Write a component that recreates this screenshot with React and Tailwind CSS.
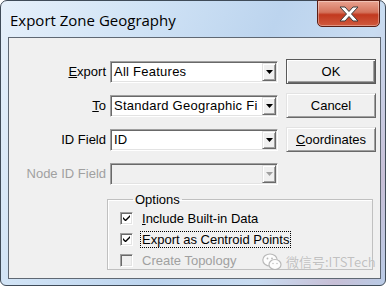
import React from 'react';

const font = { fontFamily: '"Liberation Sans", Arial, sans-serif' };

function Arrow({ disabled }) {
  return (
    <svg width="7" height="4" viewBox="0 0 7 4">
      <path d="M0 0h7L3.5 4z" fill={disabled ? '#a0a0a0' : '#000'} />
    </svg>
  );
}

function Combo({ value, disabled }) {
  return (
    <div
      className={`w-[168px] h-[22px] flex border border-t-[#a0a0a0] border-l-[#a0a0a0] border-b-white border-r-white shadow-[inset_1px_1px_0_#696969,inset_-1px_-1px_0_#e3e3e3] p-[1px] ${
        disabled ? 'bg-[#f0f0f0]' : 'bg-white'
      }`}
    >
      <div className="flex-1 mr-[5px] overflow-hidden whitespace-nowrap pl-[2px] text-[13px] leading-[18px] tracking-[0.25px] text-black">
        {value}
      </div>
      <div className="w-[14px] h-[18px] bg-[#f0f0f0] flex items-center justify-center border border-t-[#e3e3e3] border-l-[#e3e3e3] border-b-[#696969] border-r-[#696969] shadow-[inset_1px_1px_0_#fff,inset_-1px_-1px_0_#a0a0a0]">
        <Arrow disabled={disabled} />
      </div>
    </div>
  );
}

function Button({ children, isDefault }) {
  return (
    <div
      className={`w-[90px] h-[25px] flex items-center justify-center text-[13px] text-black bg-[#f0f0f0] ${
        isDefault
          ? 'border border-[#5a5a5a] shadow-[inset_1px_1px_0_#fff,inset_-1px_-1px_0_#696969,inset_-2px_-2px_0_#a0a0a0]'
          : 'border border-t-[#e3e3e3] border-l-[#e3e3e3] border-b-[#696969] border-r-[#696969] shadow-[inset_1px_1px_0_#fff,inset_-1px_-1px_0_#a0a0a0]'
      }`}
    >
      {children}
    </div>
  );
}

function Row({ underline, rest, value, disabled, button }) {
  return (
    <div className="flex items-center h-[25px]">
      <div
        className={`w-[97px] text-right text-[13px] whitespace-nowrap ${
          disabled ? 'text-[#a0a0a0]' : 'text-black'
        }`}
      >
        {underline && <span className="underline">{underline}</span>}
        {rest}
      </div>
      <div className="ml-[4px]">
        <Combo value={value} disabled={disabled} />
      </div>
      {button && <div className="ml-[8px]">{button}</div>}
    </div>
  );
}

function Check({ checked, disabled, children, focus }) {
  return (
    <div className="flex items-center h-[17px]">
      <div
        className={`w-[13px] h-[13px] flex items-center justify-center border border-t-[#a0a0a0] border-l-[#a0a0a0] border-b-white border-r-white shadow-[inset_1px_1px_0_#696969,inset_-1px_-1px_0_#e3e3e3] ${
          disabled ? 'bg-[#f0f0f0]' : 'bg-white'
        }`}
      >
        {checked && (
          <svg width="7" height="7" viewBox="0 0 7 7">
            <path d="M0 2v2l2 2h1l4-4V0L2.5 4.5z" fill="#000" />
          </svg>
        )}
      </div>
      <div
        className={`ml-[7px] px-[1px] h-[17px] leading-[15px] text-[13px] whitespace-nowrap border border-dotted ${
          focus ? 'border-black' : 'border-transparent'
        } ${disabled ? 'text-[#a0a0a0]' : 'text-black'}`}
      >
        {children}
      </div>
    </div>
  );
}

export default function App() {
  return (
    <div className="w-[388px] h-[287px] bg-white relative overflow-hidden" style={font}>
      <div className="w-[386px] h-[286px] rounded-t-[7px] rounded-b-[6px] border border-[#3f4b58] bg-[linear-gradient(115deg,#e6f0fa_0%,#cfe2f5_30%,#bcd4ee_55%,#c9dcf1_75%,#c7bfd6_90%,#b9cbe6_100%)] flex flex-col pl-[7px] pr-[4px] pb-[6px]">
        <div className="h-[36px] flex items-start shrink-0">
          <div
            className="mt-[8px] ml-[2px] text-[15px] text-black"
            style={{ fontFamily: '"Open Sans", "Noto Sans", sans-serif' }}
          >
            Export Zone Geography
          </div>
          <div className="ml-auto mr-[1px] -mt-[1px] w-[63px] h-[27px] rounded-b-[5px] border border-[#5b1e14] bg-[linear-gradient(#e9a391_0%,#d4735c_45%,#c2391f_55%,#d05a3e_100%)] shadow-[inset_0_0_0_1px_rgba(255,255,255,0.35)] flex items-center justify-center">
            <svg width="22" height="16" viewBox="0 0 22 16">
              <path
                d="M2 1h5l4 4.5L15 1h5l-6.5 7 6.5 7h-5l-4-4.5L7 15H2l6.5-7z"
                fill="#fff"
                stroke="#3c3c3c"
                strokeWidth="1"
              />
            </svg>
          </div>
        </div>
        <div className="flex-1 border border-[#5f6873] bg-[#f0f0f0] flex flex-col pt-[21px] relative">
          <div className="flex flex-col gap-[9px]">
            <Row
              underline="E"
              rest="xport"
              value="All Features"
              button={<Button isDefault>OK</Button>}
            />
            <Row
              underline="T"
              rest="o"
              value="Standard Geographic File"
              button={<Button>Cancel</Button>}
            />
            <Row
              rest="ID Field"
              value="ID"
              button={
                <Button>
                  <span className="underline">C</span>oordinates
                </Button>
              }
            />
            <Row rest="Node ID Field" value="" disabled />
          </div>
          <fieldset className="ml-[98px] mt-[6px] w-[266px] h-[78px] border border-[#c0c0c0] shadow-[inset_1px_1px_0_#fff] pl-[12px]">
            <legend className="ml-[13px] px-[2px] text-[13px] leading-[15px] text-black">
              Options
            </legend>
            <div className="flex flex-col gap-[4px] mt-[3px]">
              <Check checked>
                <span className="underline">I</span>nclude Built-in Data
              </Check>
              <Check checked focus>
                Export as Centroid Points
              </Check>
              <Check disabled>Create Topology</Check>
            </div>
          </fieldset>
          <div className="absolute left-[253px] top-[214px] flex items-center gap-[4px] whitespace-nowrap opacity-90">
            <svg width="20" height="18" viewBox="0 0 20 18">
              <ellipse cx="8" cy="7" rx="7.2" ry="6" fill="#fff" stroke="#b4b4b4" strokeWidth="1.2" />
              <ellipse cx="13" cy="11.5" rx="6" ry="5" fill="#fff" stroke="#b4b4b4" strokeWidth="1.2" />
              <circle cx="5.5" cy="5.5" r="0.9" fill="#b4b4b4" />
              <circle cx="10" cy="5.5" r="0.9" fill="#b4b4b4" />
              <circle cx="11" cy="10.5" r="0.7" fill="#b4b4b4" />
              <circle cx="15" cy="10.5" r="0.7" fill="#b4b4b4" />
            </svg>
            <span
              className="text-[13px] text-[#bcbcbc]"
              style={{ fontFamily: '"Noto Sans CJK SC", "Liberation Sans", sans-serif', textShadow: '0 0 1px #fff' }}
            >
              微信号:ITSTech
            </span>
          </div>
        </div>
      </div>
    </div>
  );
}
